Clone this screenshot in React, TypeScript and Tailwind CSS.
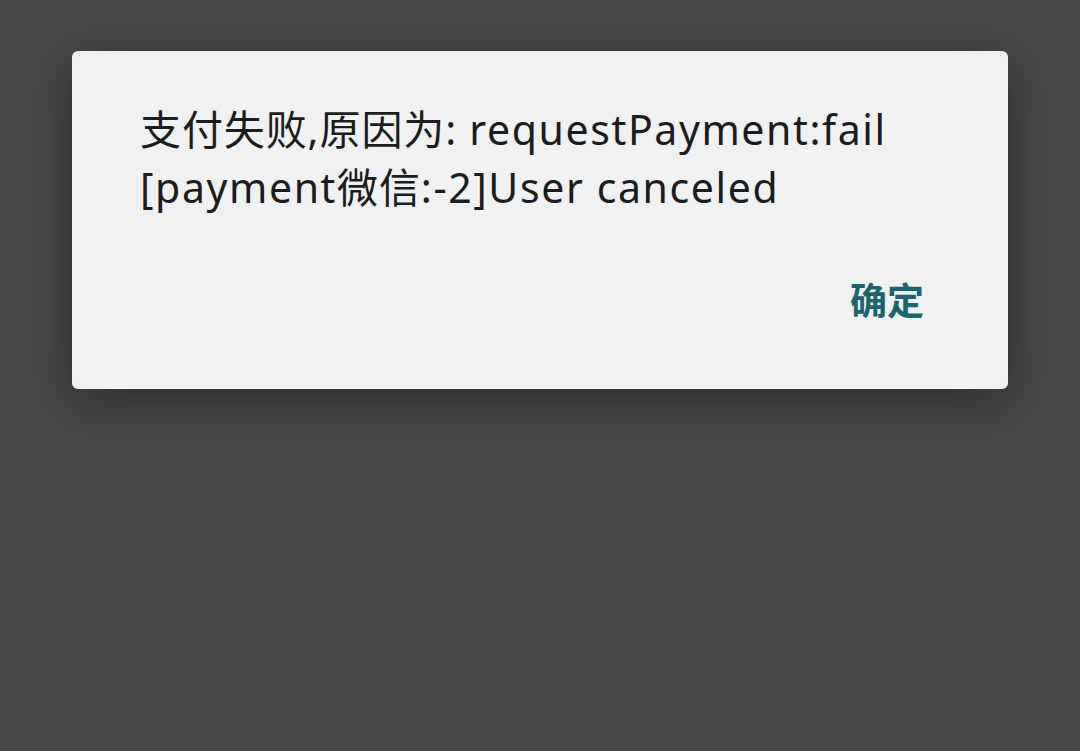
import React from "react";

export default function App() {
  return (
    <div className="w-[1080px] h-[751px] bg-[#464847] pt-[51px] pl-[72px] overflow-hidden">
      <div
        className="w-[936px] h-[338px] bg-[#eff1f3] rounded-[6px] shadow-[0_12px_50px_rgba(0,0,0,0.35)] flex flex-col pl-[68px] pr-[84px] pt-[49px]"
        style={{ fontFamily: '"Noto Sans", "Noto Sans CJK SC", sans-serif' }}
      >
        <p className="text-[41px] leading-[58px] text-[#1c1c1c] tracking-[0.9px] whitespace-nowrap">
          支付失败,原因为:<span className="tracking-[1.6px]"> requestPayment:fail</span>
          <br />
          <span className="tracking-[1.6px]">[payment</span>微信<span className="tracking-[1.6px]">:-2]User canceled</span>
        </p>
        <div className="flex justify-end mt-[65px]">
          <button className="text-[37px] leading-[40px] font-bold text-[#1a656c]">确定</button>
        </div>
      </div>
    </div>
  );
}
